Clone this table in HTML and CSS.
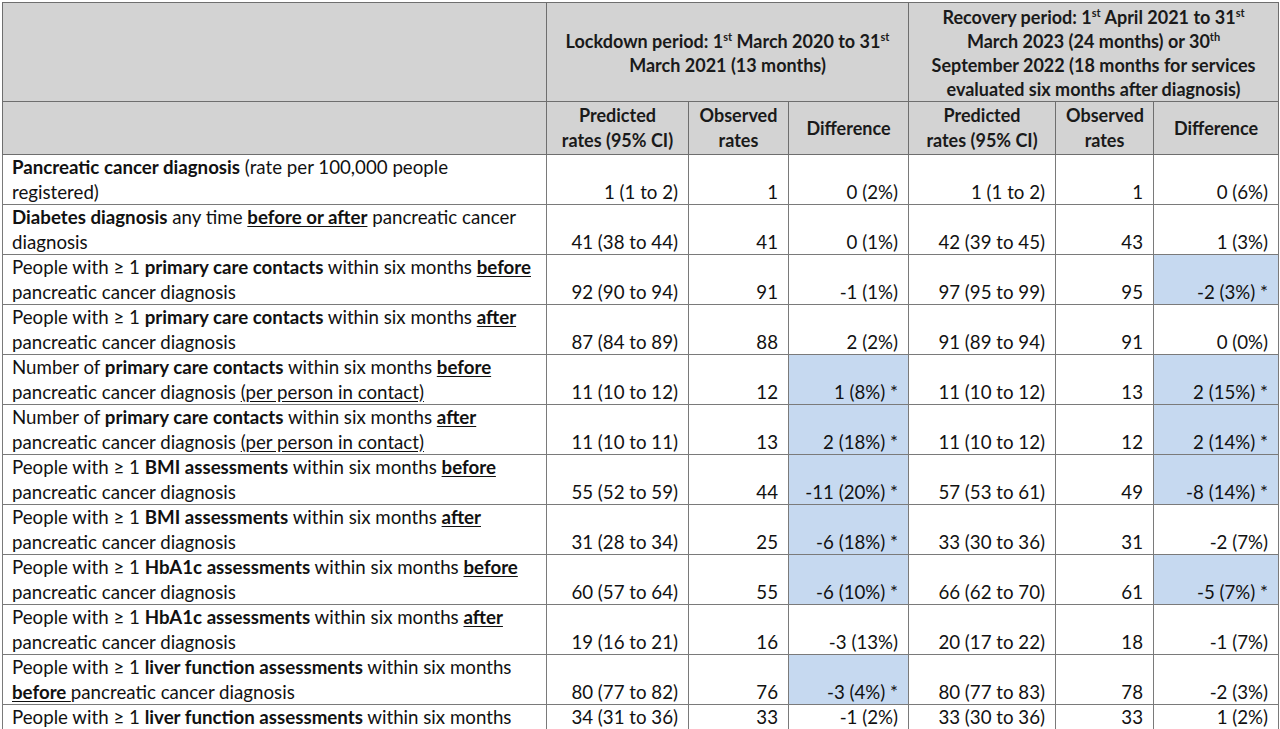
FILE: index.html
```html
<!DOCTYPE html>
<html>
<head>
<meta charset="utf-8">
<link rel="stylesheet" href="styles.css">
</head>
<body>
<table class="tbl">
<colgroup>
<col class="c-label"><col class="c-pred"><col class="c-obs"><col class="c-diff"><col class="c-pred2"><col class="c-obs2"><col class="c-diff2">
</colgroup>
<thead>
<tr class="h1">
<th></th>
<th colspan="3">Lockdown period: 1<sup>st</sup> March 2020 to 31<sup>st</sup><br>March 2021 (13 months)</th>
<th colspan="3">Recovery period: 1<sup>st</sup> April 2021 to 31<sup>st</sup><br>March 2023 (24 months) or 30<sup>th</sup><br>September 2022 (18 months for services<br>evaluated six months after diagnosis)</th>
</tr>
<tr class="h2">
<th></th>
<th>Predicted<br>rates (95% CI)</th>
<th>Observed<br>rates</th>
<th>Difference</th>
<th>Predicted<br>rates (95% CI)</th>
<th>Observed<br>rates</th>
<th>Difference</th>
</tr>
</thead>
<tbody>
<tr>
<td class="lbl"><b>Pancreatic cancer diagnosis</b> (rate per 100,000 people<br>registered)</td>
<td>1 (1 to 2)</td><td>1</td><td>0 (2%)</td><td>1 (1 to 2)</td><td>1</td><td>0 (6%)</td>
</tr>
<tr>
<td class="lbl"><b>Diabetes diagnosis</b> any time <b><u>before or after</u></b> pancreatic cancer<br>diagnosis</td>
<td>41 (38 to 44)</td><td>41</td><td>0 (1%)</td><td>42 (39 to 45)</td><td>43</td><td>1 (3%)</td>
</tr>
<tr>
<td class="lbl">People with ≥ 1 <b>primary care contacts</b> within six months <b><u>before</u></b><br>pancreatic cancer diagnosis</td>
<td>92 (90 to 94)</td><td>91</td><td>-1 (1%)</td><td>97 (95 to 99)</td><td>95</td><td class="sig">-2 (3%) *</td>
</tr>
<tr>
<td class="lbl">People with ≥ 1 <b>primary care contacts</b> within six months <b><u>after</u></b><br>pancreatic cancer diagnosis</td>
<td>87 (84 to 89)</td><td>88</td><td>2 (2%)</td><td>91 (89 to 94)</td><td>91</td><td>0 (0%)</td>
</tr>
<tr>
<td class="lbl">Number of <b>primary care contacts</b> within six months <b><u>before</u></b><br>pancreatic cancer diagnosis <u>(per person in contact)</u></td>
<td>11 (10 to 12)</td><td>12</td><td class="sig">1 (8%) *</td><td>11 (10 to 12)</td><td>13</td><td class="sig">2 (15%) *</td>
</tr>
<tr>
<td class="lbl">Number of <b>primary care contacts</b> within six months <b><u>after</u></b><br>pancreatic cancer diagnosis <u>(per person in contact)</u></td>
<td>11 (10 to 11)</td><td>13</td><td class="sig">2 (18%) *</td><td>11 (10 to 12)</td><td>12</td><td class="sig">2 (14%) *</td>
</tr>
<tr>
<td class="lbl">People with ≥ 1 <b>BMI assessments</b> within six months <b><u>before</u></b><br>pancreatic cancer diagnosis</td>
<td>55 (52 to 59)</td><td>44</td><td class="sig">-11 (20%) *</td><td>57 (53 to 61)</td><td>49</td><td class="sig">-8 (14%) *</td>
</tr>
<tr>
<td class="lbl">People with ≥ 1 <b>BMI assessments</b> within six months <b><u>after</u></b><br>pancreatic cancer diagnosis</td>
<td>31 (28 to 34)</td><td>25</td><td class="sig">-6 (18%) *</td><td>33 (30 to 36)</td><td>31</td><td>-2 (7%)</td>
</tr>
<tr>
<td class="lbl">People with ≥ 1 <b>HbA1c assessments</b> within six months <b><u>before</u></b><br>pancreatic cancer diagnosis</td>
<td>60 (57 to 64)</td><td>55</td><td class="sig">-6 (10%) *</td><td>66 (62 to 70)</td><td>61</td><td class="sig">-5 (7%) *</td>
</tr>
<tr>
<td class="lbl">People with ≥ 1 <b>HbA1c assessments</b> within six months <b><u>after</u></b><br>pancreatic cancer diagnosis</td>
<td>19 (16 to 21)</td><td>16</td><td>-3 (13%)</td><td>20 (17 to 22)</td><td>18</td><td>-1 (7%)</td>
</tr>
<tr>
<td class="lbl">People with ≥ 1 <b>liver function assessments</b> within six months<br><b><u>before </u></b>pancreatic cancer diagnosis</td>
<td>80 (77 to 82)</td><td>76</td><td class="sig">-3 (4%) *</td><td>80 (77 to 83)</td><td>78</td><td>-2 (3%)</td>
</tr>
<tr class="last">
<td class="lbl">People with ≥ 1 <b>liver function assessments</b> within six months</td>
<td>34 (31 to 36)</td><td>33</td><td>-1 (2%)</td><td>33 (30 to 36)</td><td>33</td><td>1 (2%)</td>
</tr>
</tbody>
</table>
</body>
</html>
```

FILE: styles.css
```css
html, body {
  margin: 0;
  padding: 0;
  background: #ffffff;
}
body {
  padding: 2px 0 0 2px;
  font-family: Lato, "Open Sans", sans-serif;
  font-size: 18.7px;
  color: #111;
}
.tbl {
  border-collapse: collapse;
  table-layout: fixed;
  width: 1276px;
}
.c-label { width: 544px; }
.c-pred { width: 142px; }
.c-obs { width: 100px; }
.c-diff { width: 120px; }
.c-pred2 { width: 147px; }
.c-obs2 { width: 98px; }
.c-diff2 { width: 125px; }
.tbl th, .tbl td {
  border: 1px solid #7a7a7a;
  padding: 0 10px;
  line-height: 24.5px;
  vertical-align: bottom;
  text-align: right;
  white-space: nowrap;
  overflow: hidden;
}
.tbl th {
  background: #d3d3d3;
  font-weight: bold;
  font-size: 18px;
  text-align: center;
  vertical-align: middle;
  border-color: #6e6e6e;
  color: #1a1a1a;
}
.h1 th { height: 97px; line-height: 24px; padding-top: 1px; }
.h2 th { height: 52px; line-height: 25px; }
.tbl td { height: 49px; }
.tbl .last td { height: 24px; }
.tbl td.lbl {
  text-align: left;
  padding-left: 9px;
}
.tbl td.sig {
  background: #c6d9f0;
}
sup {
  font-size: 11px;
  line-height: 0;
  vertical-align: 7px;
}
u { text-underline-offset: 2px; }
```
